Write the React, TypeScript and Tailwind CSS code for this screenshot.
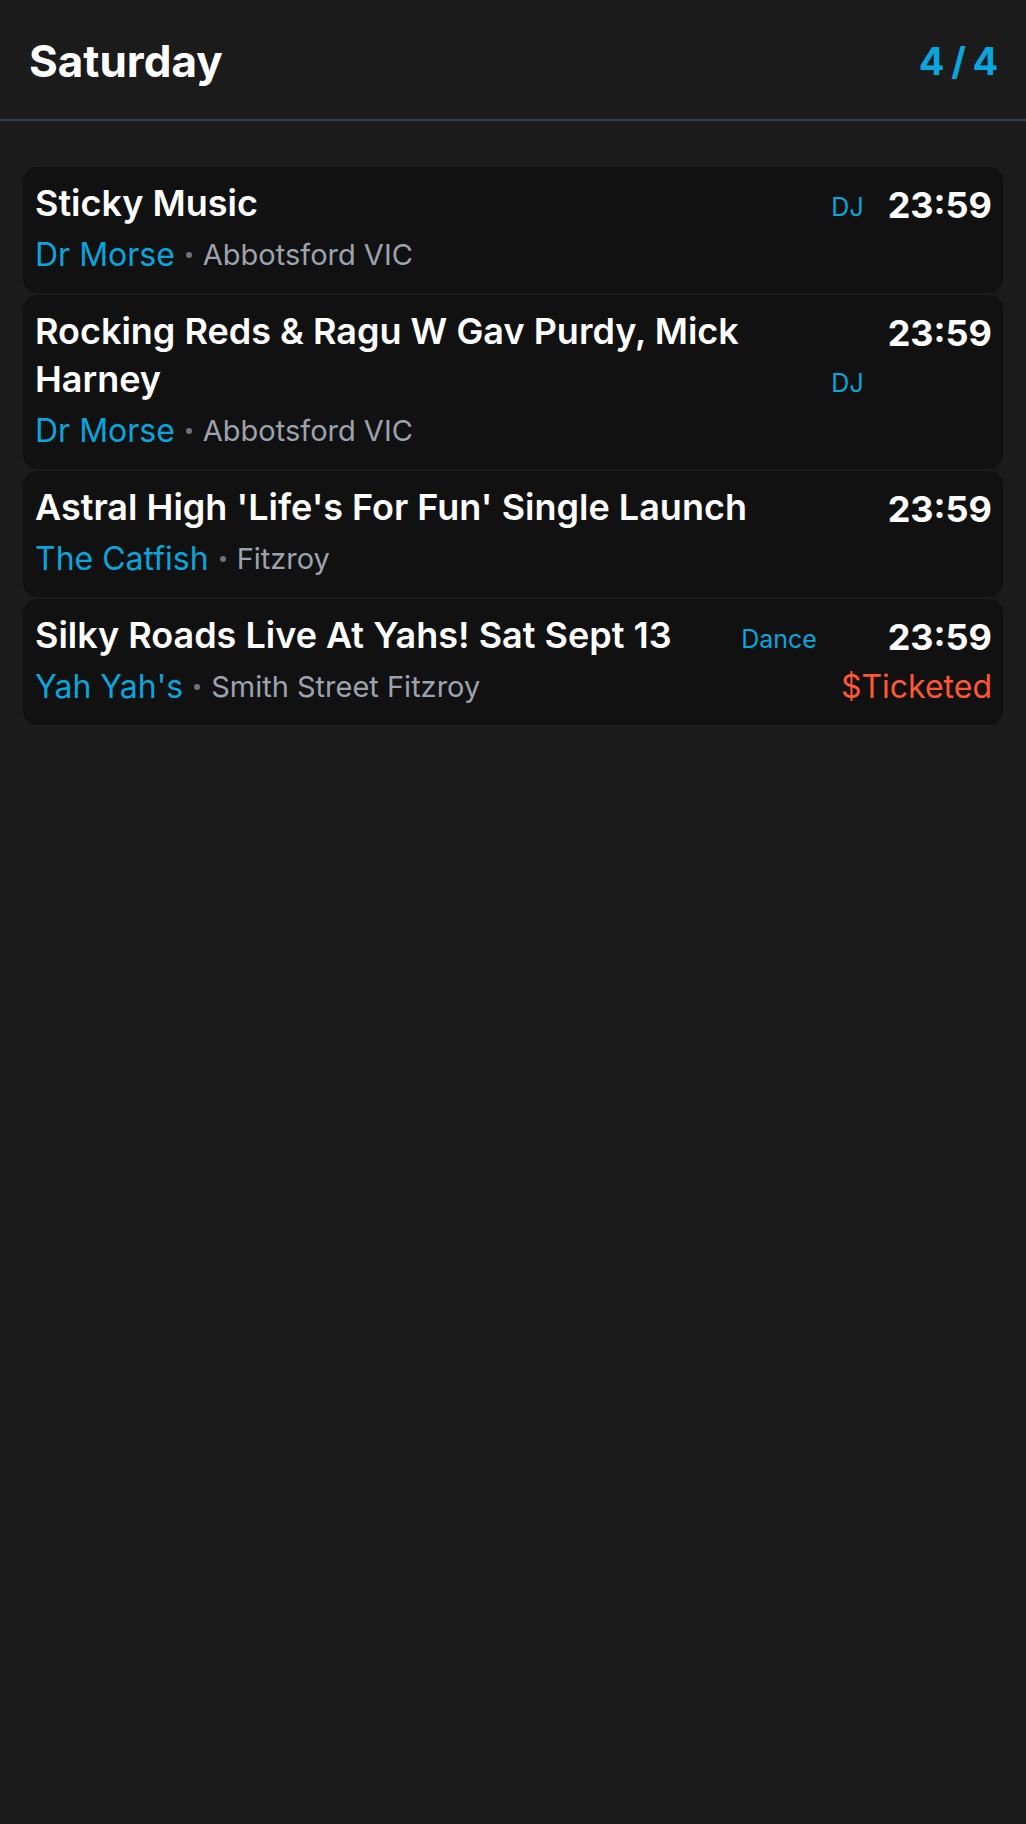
import React from "react";

type Ev = {
  title: string;
  venue: string;
  place: string;
  tag?: string;
  time: string;
  price?: string;
};

const events: Ev[] = [
  { title: "Sticky Music", venue: "Dr Morse", place: "Abbotsford VIC", tag: "DJ", time: "23:59" },
  {
    title: "Rocking Reds & Ragu W Gav Purdy, Mick Harney",
    venue: "Dr Morse",
    place: "Abbotsford VIC",
    tag: "DJ",
    time: "23:59",
  },
  { title: "Astral High 'Life's For Fun' Single Launch", venue: "The Catfish", place: "Fitzroy", time: "23:59" },
  {
    title: "Silky Roads Live At Yahs! Sat Sept 13",
    venue: "Yah Yah's",
    place: "Smith Street Fitzroy",
    tag: "Dance",
    time: "23:59",
    price: "$Ticketed",
  },
];

function Card({ ev }: { ev: Ev }) {
  return (
    <div className="flex gap-6 rounded-[14px] bg-[#111111] pl-3 pr-[11px] pt-3 pb-[18px]">
      <div className="flex min-w-0 flex-1 flex-col">
        <div className="flex items-end gap-4">
          <div className="min-w-0 flex-1 text-[36px] font-semibold leading-[48px] text-white">{ev.title}</div>
          {ev.tag && <div className="text-[25px] leading-[40px] text-[#0aa5dd]">{ev.tag}</div>}
        </div>
        <div className="mt-2 flex items-center leading-[40px]">
          <span className="text-[32px] text-[#0aa5dd]">{ev.venue}</span>
          <span className="mx-[11px] inline-block h-[6px] w-[6px] rounded-full bg-[#6b7280]" />
          <span className="text-[29px] text-[#9ca3af]">{ev.place}</span>
        </div>
      </div>
      <div className="flex flex-col items-end pt-[2px]">
        <div className="text-[36px] font-bold leading-[48px] text-white">{ev.time}</div>
        {ev.price && <div className="mt-[6px] text-[32px] leading-[40px] text-[#ff5733]">{ev.price}</div>}
      </div>
    </div>
  );
}

export default function App() {
  return (
    <div
      className="min-h-[1824px] w-full bg-[#1b1b1b]"
      style={{ fontFamily: "Inter, 'Noto Sans', sans-serif" }}
    >
      <header className="flex h-[121px] items-center justify-between border-b-2 border-[#374151] px-[29px] pt-[2px]">
        <h1 className="text-[44px] font-bold leading-none text-white">Saturday</h1>
        <div className="text-[38px] font-bold leading-none tracking-[-1.2px] text-[#0aa5dd]">4 / 4</div>
      </header>
      <main className="flex flex-col gap-[2px] px-[23px] pt-[46px]">
        {events.map((ev, i) => (
          <Card key={i} ev={ev} />
        ))}
      </main>
    </div>
  );
}
